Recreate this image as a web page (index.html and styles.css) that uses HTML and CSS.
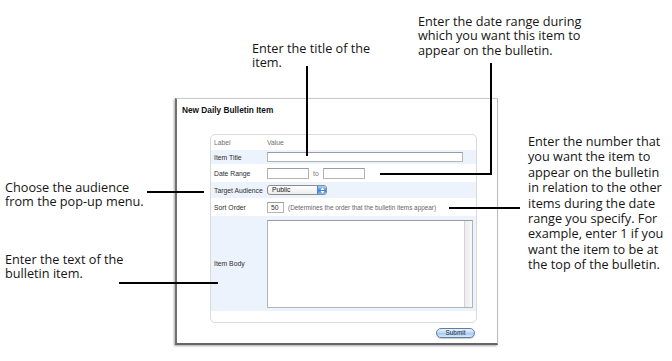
FILE: index.html
```html
<!DOCTYPE html>
<html lang="en">
<head>
    <meta charset="UTF-8">
    <title>New Daily Bulletin Item</title>
    <link rel="stylesheet" href="styles.css">
</head>
<body>
    <div class="stage">
        <div class="window">
            <h1 class="window-title">New Daily Bulletin Item</h1>

            <div class="panel">
                <div class="row row-head">
                    <span class="label">Label</span>
                    <span class="value">Value</span>
                </div>
                <div class="row row-title shaded">
                    <span class="label">Item Title</span>
                    <div class="value"><input class="field field-title" type="text"></div>
                </div>
                <div class="row row-date">
                    <span class="label">Date Range</span>
                    <div class="value">
                        <input class="field field-date" type="text">
                        <span class="to">to</span>
                        <input class="field field-date" type="text">
                    </div>
                </div>
                <div class="row row-audience shaded">
                    <span class="label">Target Audience</span>
                    <div class="value">
                        <div class="popup">
                            <span class="popup-text">Public</span>
                            <span class="popup-arrows">
                                <svg width="5" height="7" viewBox="0 0 5 7"><path d="M2.5 0.5 L4.5 3 L0.5 3 Z M0.5 4 L4.5 4 L2.5 6.5 Z" fill="#fff"/></svg>
                            </span>
                        </div>
                    </div>
                </div>
                <div class="row row-sort">
                    <span class="label">Sort Order</span>
                    <div class="value">
                        <input class="field field-sort" type="text" value="50">
                        <span class="hint">(Determines the order that the bulletin items appear)</span>
                    </div>
                </div>
                <div class="row row-body shaded">
                    <span class="label">Item Body</span>
                    <div class="value">
                        <div class="textbox"><div class="scrolltrack"></div></div>
                    </div>
                </div>
            </div>

            <div class="actions">
                <button class="submit" type="button">Submit</button>
            </div>
        </div>
    </div>

    <!-- callouts -->
    <p class="note note-title">Enter the title of the<br>item.</p>
    <p class="note note-date">Enter the date range during<br>which you want this item to<br>appear on the bulletin.</p>
    <p class="note note-audience">Choose the audience<br>from the pop-up menu.</p>
    <p class="note note-body">Enter the text of the<br>bulletin item.</p>
    <p class="note note-sort">Enter the number that<br>you want the item to<br>appear on the bulletin<br>in relation to the other<br>items during the date<br>range you specify. For<br>example, enter 1 if you<br>want the item to be at<br>the top of the bulletin.</p>

    <div class="lead lead-title"></div>
    <div class="lead lead-date-v"></div>
    <div class="lead lead-date-h"></div>
    <div class="lead lead-audience"></div>
    <div class="lead lead-sort"></div>
    <div class="lead lead-body"></div>
</body>
</html>
```

FILE: styles.css
```css
* {
    margin: 0;
    padding: 0;
    box-sizing: border-box;
}

body {
    width: 672px;
    height: 361px;
    position: relative;
    overflow: hidden;
    background: #ffffff;
    font-family: 'Liberation Sans', Arial, sans-serif;
    color: #222;
}

.stage {
    padding: 98px 0 0 175px;
}

/* window */
.window {
    width: 323px;
    height: 247px;
    background: #ffffff;
    border-top: 1px solid #c9c9c9;
    border-right: 1px solid #bdbdbd;
    border-left: 2px solid #727272;
    border-bottom: 2px solid #666;
    box-shadow: -1px 1px 2px rgba(0, 0, 0, 0.35);
}

.window-title {
    font-size: 8.3px;
    line-height: 10px;
    font-weight: bold;
    color: #111;
    padding: 6px 0 0 5px;
}

.panel {
    margin: 19px 20px 0 33px;
    border: 1px solid #dadada;
    border-radius: 5px;
    background: #fff;
    padding-bottom: 11px;
}

.row {
    display: flex;
    align-items: center;
    font-size: 6.8px;
    color: #2e2e2e;
}

.row.shaded {
    background: #edf3fc;
}

.row .label {
    width: 56px;
    padding-left: 3px;
    flex-shrink: 0;
}

.row .value {
    display: flex;
    align-items: center;
}

.row-head {
    height: 15px;
    color: #707070;
}

.row-title { height: 14px; }
.row-date { height: 18px; }
.row-audience { height: 16px; }
.row-sort { height: 18px; }
.row-body { height: 95px; }

.field {
    height: 11px;
    border: 1px solid #b4b4b4;
    border-top-color: #9c9c9c;
    background: #fff;
    font-family: 'Liberation Sans', Arial, sans-serif;
    font-size: 6.8px;
    color: #333;
    padding: 0 3px;
    outline: none;
}

.field-title {
    width: 196px;
    height: 10px;
}

.field-date {
    width: 42px;
}

.to {
    color: #777;
    margin: 0 4px;
}

.field-sort {
    width: 17px;
}

.hint {
    color: #666;
    margin-left: 4px;
    font-size: 6.4px;
}

.popup {
    width: 60px;
    height: 10px;
    display: flex;
    align-items: stretch;
    border: 1px solid #8d8d8d;
    border-radius: 3px;
    background: linear-gradient(#ffffff, #ececec);
    overflow: hidden;
}

.popup-text {
    flex: 1;
    padding-left: 4px;
    line-height: 8px;
    color: #111;
}

.popup-arrows {
    width: 9px;
    display: flex;
    align-items: center;
    justify-content: center;
    border-left: 1px solid #5b82b8;
    background: linear-gradient(#b3d4f7, #4b93e3 50%, #2f7ad8 51%, #8cc0f3);
}

.textbox {
    width: 206px;
    height: 88px;
    border: 1px solid #b4b4b4;
    border-top-color: #9c9c9c;
    background: #fff;
    display: flex;
    justify-content: flex-end;
}

.scrolltrack {
    width: 8px;
    border-left: 1px solid #d4d4d4;
    background: linear-gradient(90deg, #ececec, #f8f8f8);
}

.actions {
    display: flex;
    justify-content: flex-end;
    padding: 5px 22px 0 0;
}

.submit {
    width: 39px;
    height: 10px;
    border: 1px solid #5f7ea6;
    border-radius: 6px;
    background: linear-gradient(#eaf3fd, #bcd7f4 50%, #a3c7ef 51%, #d9ebfc);
    font-family: 'Liberation Sans', Arial, sans-serif;
    font-size: 6.4px;
    line-height: 8px;
    color: #1c2a3c;
    box-shadow: 0 1px 1px rgba(0, 0, 0, 0.2);
}

/* callouts */
.note {
    position: absolute;
    font-family: 'Open Sans', 'Noto Sans', sans-serif;
    font-size: 12.7px;
    line-height: 14.3px;
    color: #151515;
    white-space: nowrap;
}

.note-title { left: 252px; top: 41px; }
.note-date { left: 418px; top: 14px; }
.note-audience { left: 5px; top: 180px; }
.note-body { left: 5px; top: 252px; }
.note-sort { left: 528px; top: 134px; line-height: 15.4px; }

.lead {
    position: absolute;
    background: #000;
}

.lead-title { left: 306px; top: 66px; width: 2px; height: 90px; }
.lead-date-v { left: 490px; top: 63px; width: 2px; height: 112px; }
.lead-date-h { left: 380px; top: 173px; width: 112px; height: 2px; }
.lead-audience { left: 147px; top: 191px; width: 57px; height: 2px; }
.lead-sort { left: 449px; top: 207px; width: 71px; height: 2px; }
.lead-body { left: 119px; top: 282px; width: 99px; height: 2px; }
```
